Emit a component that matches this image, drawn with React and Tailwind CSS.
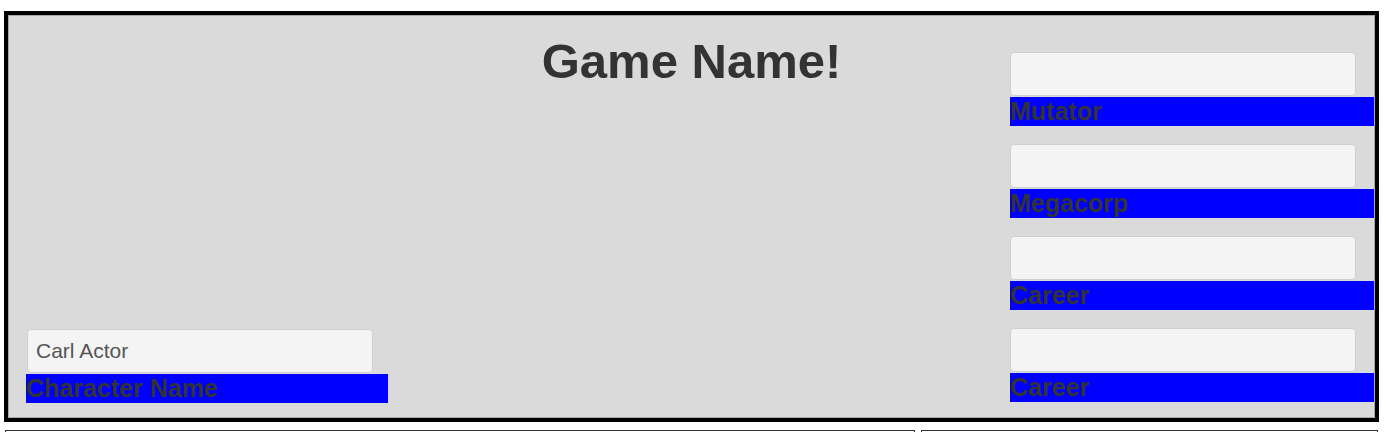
import React from 'react';

function Field({ label, value = '', shift = false }) {
  return (
    <div className="w-full">
      <input
        readOnly
        value={value}
        className={`block w-[346px] h-[44px] px-[8px] rounded-[4px] border border-[#d0d0d0] bg-[#f4f4f4] text-[21px] text-[#555] outline-none ${shift ? 'ml-[1px]' : 'ml-0'}`}
      />
      <div className="mt-[1px] h-[29px] bg-[#0000ff] text-[25px] leading-[29px] font-bold text-[#333] whitespace-nowrap">{label}</div>
    </div>
  );
}

export default function App() {
  return (
    <div className="min-h-screen bg-white pt-[11px] pl-[4px] overflow-hidden font-['Liberation_Sans',Arial,sans-serif]">
      {/* main board */}
      <div className="w-[1375px] h-[411px] border-[4px] border-black">
        <div className="h-full border border-[#a8a8a8] bg-[#dadada] grid grid-cols-[379px_1fr_364px]">
          <div className="pl-[17px] pb-[14px] flex flex-col justify-end">
            <Field label="Character Name" value="Carl Actor" shift />
          </div>
          <div className="pt-[17px] pr-[15px] text-center">
            <h1 className="text-[49px] font-bold leading-[56px] text-[#333]">Game Name!</h1>
          </div>
          <div className="pt-[36px] flex flex-col gap-[18px]">
            <Field label="Mutator" />
            <Field label="Megacorp" />
            <Field label="Career" />
            <Field label="Career" />
          </div>
        </div>
      </div>

      {/* next row, cut off by the window */}
      <div className="mt-[8px] flex gap-[6px] pl-[1px]">
        <div className="w-[910px] h-[40px] border border-[#333] border-b-0"></div>
        <div className="w-[457px] h-[40px] border border-[#333] border-b-0"></div>
      </div>
    </div>
  );
}
